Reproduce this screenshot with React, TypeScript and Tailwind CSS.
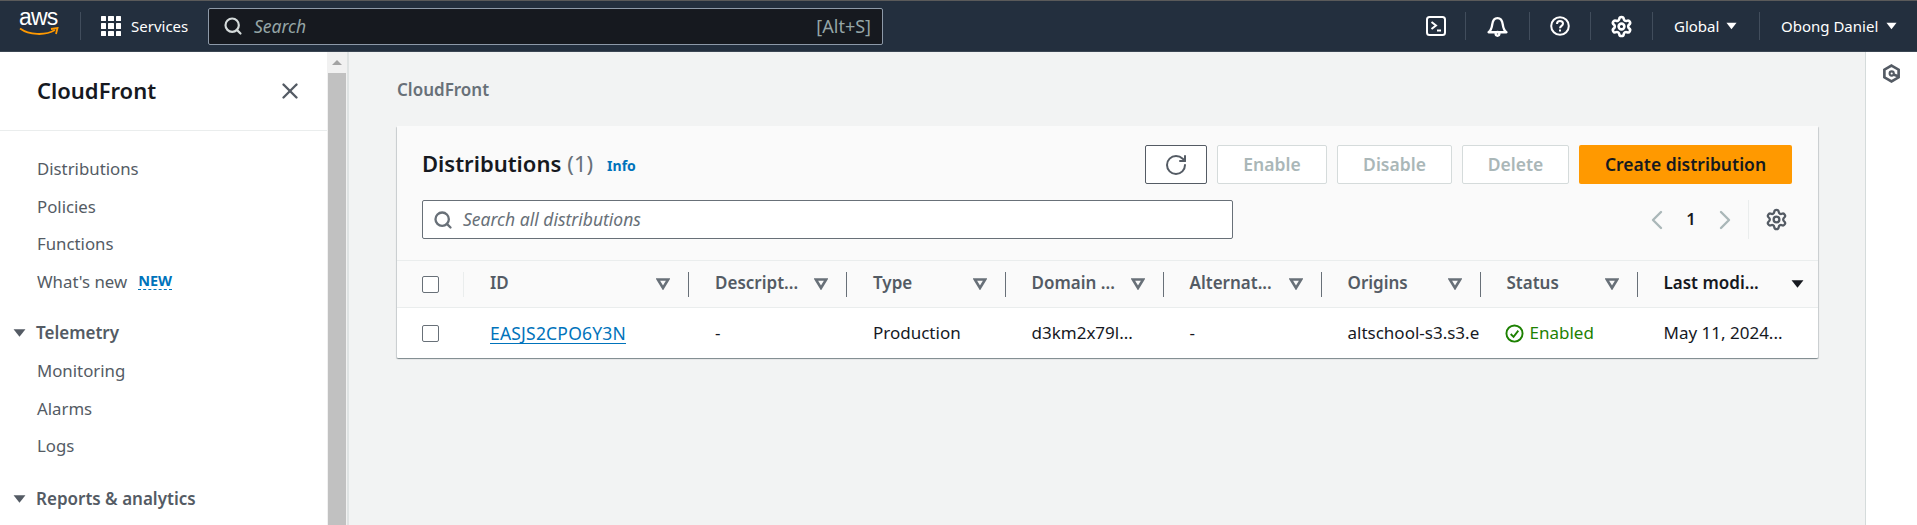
import React from "react";
import { ChevronLeft, ChevronRight, RotateCw, Search, Settings, X } from "lucide-react";

const font = { fontFamily: '"Noto Sans", sans-serif' };

function Tri({ className = "" }: { className?: string }) {
  return (
    <svg viewBox="0 0 12 8" className={className} fill="currentColor">
      <path d="M0.5 0.5H11.5L6 7.5Z" />
    </svg>
  );
}

function HollowTri() {
  return (
    <svg viewBox="0 0 14 12" className="w-[14px] h-[12px] text-[#687078] shrink-0" fill="none" stroke="currentColor" strokeWidth="2.6">
      <path d="M1.8 1.5H12.2L7 10Z" />
    </svg>
  );
}

function Sep({ className = "" }: { className?: string }) {
  return <div className={`w-[1px] h-[28px] bg-[#414d5c] shrink-0 ${className}`} />;
}

function TopBar() {
  return (
    <div className="h-[52px] shrink-0 bg-[#232f3e] border-t border-t-[#5a5a5a] border-b border-b-[#3b4653] flex items-center text-white">
      <div className="w-[80px] pl-[19px] shrink-0 flex flex-col items-start relative h-[38px]">
        <span className="text-[23px] leading-[22px] tracking-[-0.8px] -mt-[1px]" style={{ fontFamily: '"Liberation Sans", sans-serif' }}>aws</span>
        <svg viewBox="0 0 40 10" className="w-[40px] h-[10px] -mt-[1px]" fill="none" stroke="#ff9900" strokeWidth="1.8">
          <path d="M1 1.5C10 8 26 9 36 3" />
          <path d="M32 2L38.5 1L37 7" />
        </svg>
      </div>
      <Sep />
      <div className="ml-[20px] grid grid-cols-3 gap-[2px] w-[20px] shrink-0">
        {Array.from({ length: 9 }).map((_, i) => (
          <div key={i} className="w-[5.33px] h-[5.33px] bg-white rounded-[0.5px]" />
        ))}
      </div>
      <span className="ml-[10px] text-[15px] w-[57px] shrink-0 whitespace-nowrap">Services</span>
      <div className="ml-[20px] w-[675px] h-[37px] shrink-0 rounded-[2px] border border-[#8d99a8] bg-[#16191f] flex items-center pl-[14px] pr-[11px]">
        <Search className="w-[20px] h-[20px] text-[#d5dbdb]" strokeWidth={2.6} />
        <span className="ml-[11px] text-[17.5px] italic text-[#95a5a6]">Search</span>
        <span className="ml-auto text-[18px] text-[#95a5a6]">[Alt+S]</span>
      </div>
      <div className="ml-auto flex items-center h-full">
        <div className="w-[60px] flex justify-center pl-[2px]">
          <svg viewBox="0 0 20 20" className="w-[20px] h-[20px]" fill="none" stroke="white" strokeWidth="2">
            <rect x="1" y="1" width="18" height="18" rx="2.5" />
            <path d="M5.5 6L10 9.5L5.5 13" />
            <path d="M11 14.5H15" />
          </svg>
        </div>
        <Sep />
        <div className="w-[63px] flex justify-center">
          <svg viewBox="0 0 20 20" className="w-[21px] h-[21px]" fill="none" stroke="white" strokeWidth="2.2" strokeLinejoin="round">
            <path d="M1.5 15.5C3.5 14 4.5 12 5 8C5.5 4 7.5 2 10 2C12.5 2 14.5 4 15 8C15.5 12 16.5 14 18.5 15.5Z" />
            <circle cx="10" cy="17" r="1.8" />
          </svg>
        </div>
        <Sep />
        <div className="w-[60px] flex justify-center">
          <svg viewBox="0 0 20 20" className="w-[20px] h-[20px]" fill="none" stroke="white" strokeWidth="2">
            <circle cx="10" cy="10" r="8.8" />
            <path d="M7 8C7 6 8.3 5 10 5C11.8 5 13 6.1 13 7.7C13 9.8 10 10 10 12.3" />
            <path d="M10 13.6V15.5" />
          </svg>
        </div>
        <Sep />
        <div className="w-[61px] flex justify-center">
          <Settings className="w-[23px] h-[23px] text-white" strokeWidth={2.7} />
        </div>
        <Sep />
        <div className="w-[106px] pl-[21px] flex items-center text-[15px]">
          <span>Global</span>
          <Tri className="w-[11px] h-[8px] ml-[7px]" />
        </div>
        <Sep />
        <div className="w-[157px] pl-[21px] flex items-center text-[15px]">
          <span className="whitespace-nowrap">Obong Daniel</span>
          <Tri className="w-[11px] h-[8px] ml-[8px]" />
        </div>
      </div>
    </div>
  );
}

function NavLink({ children }: { children: React.ReactNode }) {
  return <div className="h-[37.5px] flex items-center pl-[37px] text-[16.8px] text-[#545b64]">{children}</div>;
}

function NavHead({ children }: { children: React.ReactNode }) {
  return (
    <div className="h-[38px] flex items-center pl-[13px] text-[17px] font-semibold text-[#545b64]">
      <Tri className="w-[13px] h-[10px] mr-[10px] text-[#545b64]" />
      {children}
    </div>
  );
}

function Sidebar() {
  return (
    <div className="w-[327px] shrink-0 bg-white overflow-hidden">
      <div className="h-[79px] border-b border-[#eaeded] flex items-center justify-between pl-[37px] pr-[24px]">
        <span className="text-[22px] font-semibold text-[#16191f] -mt-[2px]">CloudFront</span>
        <X className="w-[26px] h-[26px] text-[#545b64]" strokeWidth={2.2} />
      </div>
      <div className="pt-[19px]">
        <NavLink>Distributions</NavLink>
        <NavLink>Policies</NavLink>
        <NavLink>Functions</NavLink>
        <NavLink>
          <span>What's new</span>
          <span className="ml-[11px] text-[14.5px] font-bold text-[#0073bb] border-b border-dashed border-[#0073bb] leading-[17px]">NEW</span>
        </NavLink>
        <div className="h-[14px]" />
        <NavHead>Telemetry</NavHead>
        <NavLink>Monitoring</NavLink>
        <NavLink>Alarms</NavLink>
        <NavLink>Logs</NavLink>
        <div className="h-[15px]" />
        <NavHead>Reports &amp; analytics</NavHead>
      </div>
    </div>
  );
}

function Scrollbar() {
  return (
    <div className="w-[22px] shrink-0 bg-[#f1f1f1] border-r-2 border-r-[#dfe3e3] flex flex-col">
      <div className="h-[21px] flex items-center justify-center">
        <div className="w-0 h-0 border-l-[5px] border-r-[5px] border-b-[5px] border-l-transparent border-r-transparent border-b-[#a3a3a3]" />
      </div>
      <div className="flex-1 bg-[#c1c1c1] mr-[1px] ml-[1px]" />
    </div>
  );
}

function ActionBtn({ children }: { children: React.ReactNode }) {
  return (
    <div className="h-[39px] flex items-center justify-center bg-white border border-[#d5dbdb] rounded-[2px] text-[17.5px] font-semibold text-[#aab7b8]">
      <span className="-mt-[1px]">{children}</span>
    </div>
  );
}

const cols = [
  { label: "ID", w: "w-[225px]", value: <span className="text-[#0073bb] border-b border-[#0073bb] leading-[20px] text-[17.5px] tracking-[0.2px]">EASJS2CPO6Y3N</span> },
  { label: "Descript...", w: "w-[158px]", value: "-" },
  { label: "Type", w: "w-[158.5px]", value: "Production" },
  { label: "Domain ...", w: "w-[158px]", value: "d3km2x79l..." },
  { label: "Alternat...", w: "w-[158px]", value: "-" },
  { label: "Origins", w: "w-[159px]", value: "altschool-s3.s3.e" },
  {
    label: "Status",
    w: "w-[157px]",
    value: (
      <span className="flex items-center text-[#1d8102] -ml-[2px]">
        <svg viewBox="0 0 20 20" className="w-[19px] h-[19px] mr-[6px]" fill="none" stroke="currentColor" strokeWidth="2">
          <circle cx="10" cy="10" r="8.5" />
          <path d="M6 10.5L9 13.5L14 7" />
        </svg>
        Enabled
      </span>
    ),
  },
];

function Card() {
  return (
    <div className="w-[1421px] h-[232px] bg-white rounded-[1px] shadow-[0_1px_1px_0_rgba(0,28,36,0.3),1px_1px_1px_0_rgba(0,28,36,0.15),-1px_1px_1px_0_rgba(0,28,36,0.15)]">
      <div className="h-[134px] bg-[#fafafa] pl-[25px] pr-[26px] pt-[19px]">
        <div className="flex items-center h-[39px]">
          <span className="text-[22px] font-semibold text-[#16191f] -mt-[3px]">Distributions</span>
          <span className="ml-[6px] text-[22px] text-[#687078] -mt-[3px]">(1)</span>
          <span className="ml-[14px] text-[14px] font-bold text-[#0073bb] mt-[2px]">Info</span>
          <div className="ml-auto flex gap-[10px]">
            <div className="w-[62px] h-[39px] bg-white border border-[#545b64] rounded-[2px] flex items-center justify-center">
              <RotateCw className="w-[24px] h-[24px] text-[#545b64]" strokeWidth={2} />
            </div>
            <div className="w-[110px]"><ActionBtn>Enable</ActionBtn></div>
            <div className="w-[115px]"><ActionBtn>Disable</ActionBtn></div>
            <div className="w-[107px]"><ActionBtn>Delete</ActionBtn></div>
            <div className="w-[213px] h-[39px] bg-[#ff9900] rounded-[2px] flex items-center justify-center text-[17.5px] font-semibold text-[#16191f]">
              <span className="-mt-[1px]">Create distribution</span>
            </div>
          </div>
        </div>
        <div className="flex items-center mt-[16px]">
          <div className="w-[811px] h-[39px] bg-white border border-[#687078] rounded-[2px] flex items-center pl-[10px]">
            <Search className="w-[20px] h-[20px] text-[#687078]" strokeWidth={2.8} />
            <span className="ml-[10px] text-[17.5px] italic text-[#687078]">Search all distributions</span>
          </div>
          <div className="ml-auto flex items-center h-[39px]">
            <ChevronLeft className="w-[32px] h-[32px] text-[#aab7b8]" strokeWidth={1.8} />
            <span className="w-[36px] text-center text-[16.5px] font-semibold text-[#16191f]">1</span>
            <ChevronRight className="w-[32px] h-[32px] text-[#aab7b8]" strokeWidth={1.8} />
            <div className="w-[1px] h-[39px] bg-[#eaeded] ml-[7px]" />
            <Settings className="w-[23px] h-[23px] text-[#545b64] ml-[16px] mr-[4px]" strokeWidth={2.4} />
          </div>
        </div>
      </div>
      <div className="h-[48px] bg-[#fafafa] border-t border-b border-[#eaeded] flex items-center">
        <div className="w-[67px] h-[25px] shrink-0 pl-[25px] border-r border-[#eaeded] flex items-center">
          <div className="w-[17px] h-[17px] bg-white border border-[#687078] rounded-[2px]" />
        </div>
        {cols.map((c) => (
          <div key={c.label} className={`${c.w} shrink-0 h-[25px] pl-[26px] pr-[18px] flex items-center justify-between border-r border-[#687078]`}>
            <span className="text-[17px] font-semibold text-[#545b64] -mt-[2px] whitespace-nowrap">{c.label}</span>
            <HollowTri />
          </div>
        ))}
        <div className="flex-1 h-[25px] pl-[26px] pr-[14px] flex items-center justify-between">
          <span className="text-[17px] font-semibold text-[#16191f] -mt-[2px] whitespace-nowrap">Last modi...</span>
          <Tri className="w-[13px] h-[10px] text-[#16191f]" />
        </div>
      </div>
      <div className="h-[50px] flex items-center text-[17px] text-[#16191f]">
        <div className="w-[67px] shrink-0 pl-[25px] flex items-center">
          <div className="w-[17px] h-[17px] bg-white border border-[#687078] rounded-[2px]" />
        </div>
        {cols.map((c) => (
          <div key={c.label} className={`${c.w} shrink-0 pl-[26px] flex items-center whitespace-nowrap`}>{c.value}</div>
        ))}
        <div className="flex-1 pl-[26px] whitespace-nowrap">May 11, 2024...</div>
      </div>
    </div>
  );
}

function RightRail() {
  return (
    <div className="w-[52px] shrink-0 bg-white border-l border-[#d5dbdb] flex justify-center pt-[12px]">
      <svg viewBox="0 0 20 20" className="w-[19px] h-[19px]" fill="none" stroke="#545b64" strokeWidth="2.8">
        <path d="M10 1.7L17.5 6V14L10 18.3L2.5 14V6Z" />
        <circle cx="10.2" cy="10" r="2.2" strokeWidth="2.2" />
        <path d="M12 11L17 13" />
      </svg>
    </div>
  );
}

export default function App() {
  return (
    <div className="w-[1917px] h-[525px] overflow-hidden flex flex-col bg-[#f2f3f3]" style={font}>
      <TopBar />
      <div className="flex flex-1 min-h-0">
        <Sidebar />
        <Scrollbar />
        <div className="flex-1 pl-[48px] pt-[27px]">
          <div className="h-[21px] flex items-center text-[17px] font-semibold text-[#687078]">CloudFront</div>
          <div className="mt-[26px]">
            <Card />
          </div>
        </div>
        <RightRail />
      </div>
    </div>
  );
}
